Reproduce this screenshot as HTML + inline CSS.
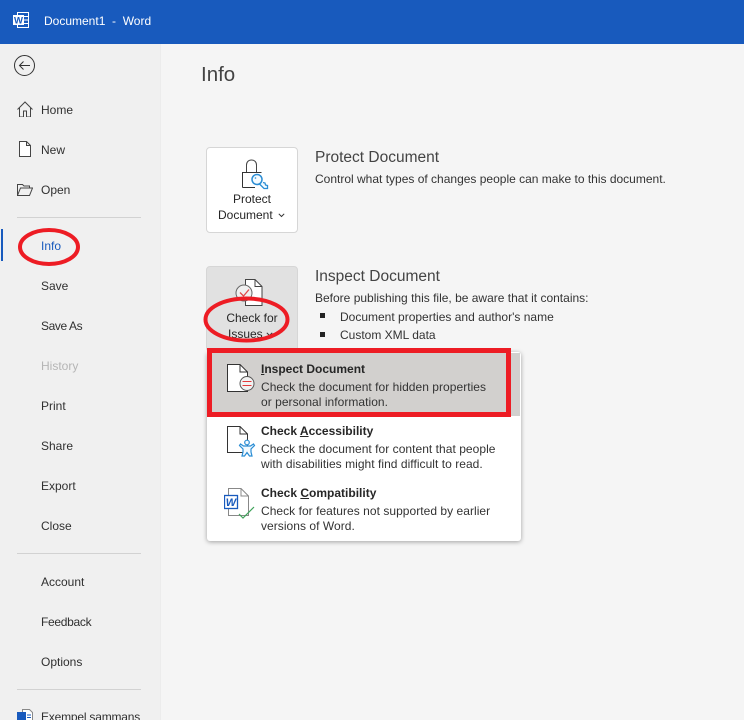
<!DOCTYPE html>
<html><head><meta charset="utf-8">
<style>
html,body{margin:0;padding:0;width:744px;height:720px;overflow:hidden;background:#f5f5f5}
#p{position:relative;width:744px;height:720px;overflow:hidden;background:#f5f5f5;font-family:"Liberation Sans",sans-serif;color:#262626}
.t{position:absolute;white-space:nowrap;font-size:12px;line-height:16px}
.n{left:41px;color:#303030}
.h{font-size:15.5px;color:#444;line-height:20px}
.b{font-weight:bold;color:#262626}
.d{color:#333}
.m{letter-spacing:.04px}
.ln{position:absolute;left:17px;width:124px;height:1px;background:#d2d2d2}
svg{position:absolute}
.c{text-align:center}
u{text-underline-offset:1px}
</style></head><body><div id="p">
<div style="position:absolute;left:0;top:0;width:744px;height:44px;background:#185abd"></div>
<svg style="left:13px;top:12px" width="17" height="17" viewBox="0 0 17 17"><path d="M4.500 .5H15.500V15.500H4.500Z" fill="#185abd" stroke="#fff"/><path d="M10 4.500H15M10 8H15M10 11.500H15" stroke="#fff"/><rect x="0" y="3" width="11" height="10" fill="#fff"/><text x="5.500" y="11.500" font-size="9.500" font-weight="bold" text-anchor="middle" fill="#185abd" font-family="Liberation Sans">W</text></svg>
<div class="t" style="left:44px;top:13px;color:#fff;white-space:pre">Document1  -  Word</div>

<div style="position:absolute;left:0;top:44px;width:160px;height:676px;background:#f0f0f0;border-right:1px solid #ececec"></div>

<svg style="left:14px;top:55px" width="21" height="21" viewBox="0 0 21 21" fill="none" stroke="#333"><circle cx="10.500" cy="10.500" r="10"/><path d="M16 10.500H5.500M9.500 6.500L5.500 10.500L9.500 14.500"/></svg>
<svg style="left:17px;top:101px" width="16" height="16" viewBox="0 0 16 16" fill="none" stroke="#444" stroke-width="1"><path d="M.5 8.500L8 1L15.500 8.500M2.500 7V16H6.500V10H9.500V16H13.500V7"/></svg>
<svg style="left:19px;top:141px" width="12" height="16" viewBox="0 0 12 16" fill="#fff" stroke="#444"><path d="M.5 .5H7.500L11.500 4.500V15.500H.5ZM7.500 .5V4.500H11.500"/></svg>
<svg style="left:17px;top:183px" width="16" height="13" viewBox="0 0 16 13" fill="none" stroke="#444"><path d="M.5 12.500V1.500H5.500L7 3H12.500V5M.5 12.500H12.500L15.500 5H3.500L.5 12.500Z"/></svg>

<div class="t n" style="top:102px">Home</div>
<div class="t n" style="top:142px">New</div>
<div class="t n" style="top:182px">Open</div>
<div class="ln" style="top:217px"></div>
<div style="position:absolute;left:1px;top:229px;width:2px;height:32px;background:#185abd"></div>
<div class="t n" style="top:238px;color:#185abd">Info</div>
<div class="t n" style="top:278px">Save</div>
<div class="t n" style="top:318px;letter-spacing:-.4px">Save As</div>
<div class="t n" style="top:358px;color:#b5b5b5">History</div>
<div class="t n" style="top:398px">Print</div>
<div class="t n" style="top:438px">Share</div>
<div class="t n" style="top:478px">Export</div>
<div class="t n" style="top:518px">Close</div>
<div class="ln" style="top:553px"></div>
<div class="t n" style="top:574px">Account</div>
<div class="t n" style="top:614px;letter-spacing:-.3px">Feedback</div>
<div class="t n" style="top:654px">Options</div>
<div class="ln" style="top:689px"></div>
<svg style="left:17px;top:709px" width="16" height="11" viewBox="0 0 16 11"><path d="M5.500 .5H12.500L15.500 3.500V14H5.500Z" fill="#fff" stroke="#888"/><rect x="0" y="3" width="9" height="11" fill="#185abd"/><path d="M10 6H14M10 8.500H14" stroke="#185abd"/></svg>
<div class="t n" style="top:709px;letter-spacing:-.2px">Exempel sammans</div>

<div class="t" style="left:201px;top:63px;font-size:20.500px;line-height:24px;color:#444">Info</div>

<div style="position:absolute;left:206px;top:147px;width:90px;height:84px;background:#fff;border:1px solid #d6d6d6;border-radius:4px"></div>
<svg style="left:241px;top:159px" width="33" height="33" viewBox="0 0 33 33" fill="none"><path d="M5.500 13V6C5.500 3 7.500 1 10.500 1S15.500 3 15.500 6V13" stroke="#444"/><path d="M1.500 28.500V13.500H20.500M1.500 28.500H14" stroke="#333"/><path d="M17.500 24L23 29.500H26.500V26.500L24.500 26L24 24L22 23.500" stroke="#2a8dd4" stroke-width="1.300" fill="#f5fbff"/><circle cx="16" cy="20.500" r="5" stroke="#2a8dd4" stroke-width="1.500" fill="#f5fbff"/><circle cx="14.500" cy="19" r=".8" fill="#2a8dd4"/></svg>
<div class="t c" style="left:206px;width:92px;top:191px;color:#262626">Protect</div>
<div class="t" style="left:218px;top:207px;color:#262626">Document</div>
<svg style="left:278px;top:213px" width="7" height="5" viewBox="0 0 7 5" fill="none" stroke="#333"><path d="M.8 .8L3.500 3.500L6.200 .8"/></svg>

<div class="t h" style="left:315px;top:148px">Protect Document</div>
<div class="t d" style="left:315px;top:171px">Control what types of changes people can make to this document.</div>

<div style="position:absolute;left:206px;top:266px;width:90px;height:84px;background:#e1e1e1;border:1px solid #d6d6d6;border-radius:4px"></div>
<svg style="left:235px;top:279px" width="28" height="32" viewBox="0 0 28 32"><path d="M10.500 .5H20L27 7.500V26.500H10.500Z" fill="#fff" stroke="#444"/><path d="M20 .5V7.500H27" fill="none" stroke="#444"/><circle cx="9" cy="14" r="8" fill="#f0f0f0" stroke="#666"/><path d="M5 13.500L8.500 17L14 10.500" fill="none" stroke="#e04a4a" stroke-width="1.300"/></svg>
<div class="t c" style="left:206px;width:92px;top:310px;color:#262626">Check for</div>
<div class="t" style="left:228px;top:326px;color:#262626">Issues</div>
<svg style="left:266px;top:332px" width="7" height="5" viewBox="0 0 7 5" fill="none" stroke="#333"><path d="M.8 .8L3.500 3.500L6.200 .8"/></svg>

<div class="t h" style="left:315px;top:267px">Inspect Document</div>
<div class="t d" style="left:315px;top:290px">Before publishing this file, be aware that it contains:</div>
<div style="position:absolute;left:320px;top:313px;width:5px;height:5px;background:#222"></div>
<div style="position:absolute;left:320px;top:332px;width:5px;height:5px;background:#222"></div>
<div class="t d" style="left:340px;top:309px">Document properties and author's name</div>
<div class="t d" style="left:340px;top:327px">Custom XML data</div>

<div style="position:absolute;left:207px;top:352px;width:314px;height:189px;background:#fff;border-radius:3px;box-shadow:0 1px 5px rgba(0,0,0,.35)"></div>
<div style="position:absolute;left:208px;top:353px;width:312px;height:63px;background:#d2d0ce"></div>

<svg style="left:227px;top:364px" width="30" height="28" viewBox="0 0 30 28"><path d="M.5 .5H13L20.500 8V27.500H.5Z" fill="#fff" stroke="#333"/><path d="M13 .5V8H20.500" fill="none" stroke="#333"/><circle cx="20" cy="19.500" r="7" fill="#f2f2f2" stroke="#555"/><path d="M15.500 17.500H24.500M15.500 21.500H24.500" stroke="#e23a3a"/></svg>
<div class="t b" style="left:261px;top:361px"><u>I</u>nspect Document</div>
<div class="t d m" style="left:261px;top:379px">Check the document for hidden properties</div>
<div class="t d m" style="left:261px;top:394px">or personal information.</div>

<svg style="left:227px;top:426px" width="30" height="32" viewBox="0 0 30 32"><path d="M.5 .5H13L20.500 8V26.500H.5Z" fill="#fff" stroke="#333"/><path d="M13 .5V8H20.500" fill="none" stroke="#333"/><g fill="#f2f9fe" stroke="#2a8dd4" stroke-width="1.200"><circle cx="20" cy="16.500" r="2.300"/><path d="M13.500 18L16.500 20H23.500L26.500 18L27.500 19.500L24 23V26L25 30H22.500L20 26.500L17.500 30H15L16 26V23L12.500 19.500Z"/></g></svg>
<div class="t b" style="left:261px;top:423px">Check <u>A</u>ccessibility</div>
<div class="t d m" style="left:261px;top:441px">Check the document for content that people</div>
<div class="t d m" style="left:261px;top:456px">with disabilities might find difficult to read.</div>

<svg style="left:224px;top:488px" width="32" height="32" viewBox="0 0 32 32"><path d="M4.500 .5H17L24.500 8V27.500H4.500Z" fill="#fff" stroke="#888"/><path d="M17 .5V8H24.500" fill="none" stroke="#888"/><rect x=".5" y="7.500" width="13" height="13" fill="#fff" stroke="#185abd" stroke-width="1.300"/><text x="7" y="18" font-size="11" font-weight="bold" font-style="italic" text-anchor="middle" fill="#185abd" font-family="Liberation Sans">W</text><path d="M15 26L19 30L30 19" fill="none" stroke="#3fa35a" stroke-width="1.200"/></svg>
<div class="t b" style="left:261px;top:485px">Check <u>C</u>ompatibility</div>
<div class="t d m" style="left:261px;top:503px">Check for features not supported by earlier</div>
<div class="t d m" style="left:261px;top:518px">versions of Word.</div>

<svg style="left:0;top:0;pointer-events:none" width="744" height="720" fill="none" stroke="#ed1c24">
<ellipse cx="49" cy="247" rx="29" ry="17" stroke-width="4"/>
<ellipse cx="246.500" cy="319.500" rx="41" ry="21" stroke-width="4"/>
<rect x="209.500" y="350.500" width="299" height="64" stroke-width="5"/>
</svg>
</div></body></html>
